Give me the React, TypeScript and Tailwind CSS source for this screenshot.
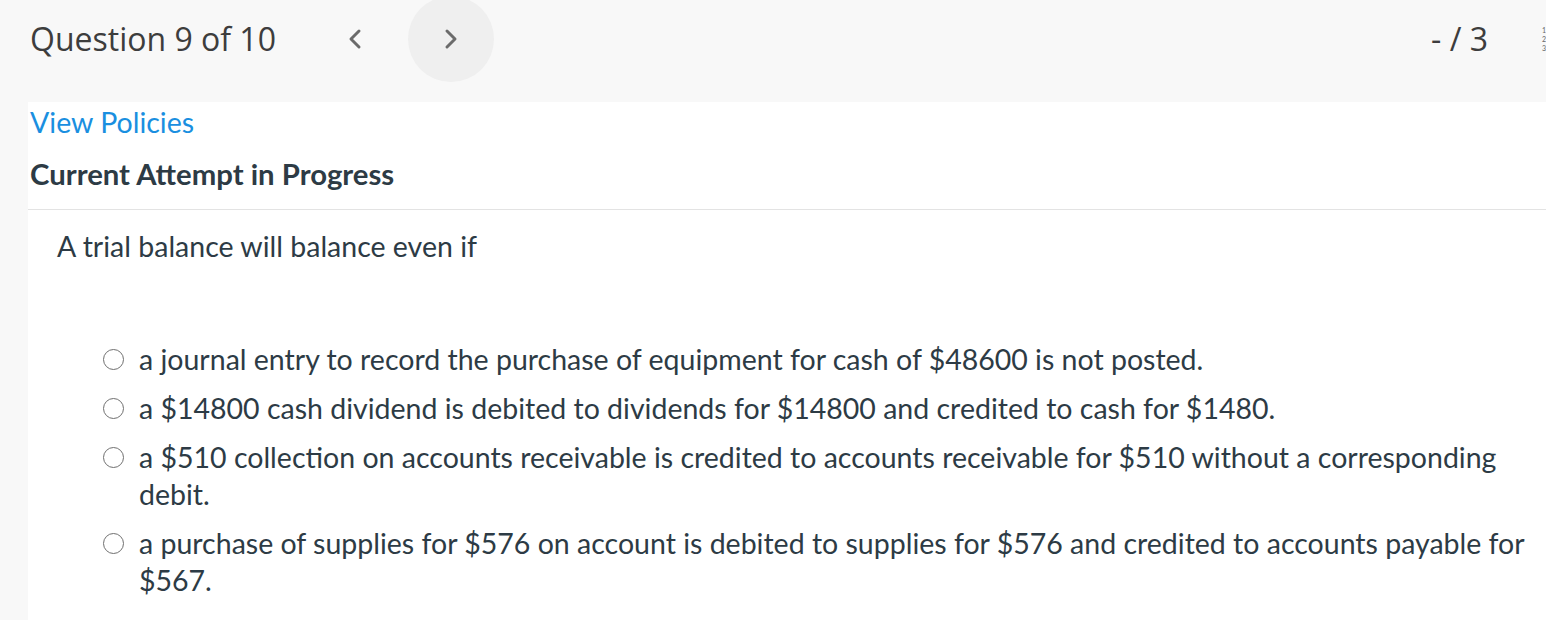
const options = [
  'a journal entry to record the purchase of equipment for cash of $48600 is not posted.',
  'a $14800 cash dividend is debited to dividends for $14800 and credited to cash for $1480.',
  'a $510 collection on accounts receivable is credited to accounts receivable for $510 without a corresponding debit.',
  'a purchase of supplies for $576 on account is debited to supplies for $576 and credited to accounts payable for $567.',
]

function Chevron({ dir }: { dir: 'left' | 'right' }) {
  return (
    <svg width="14" height="22" viewBox="0 0 14 22" fill="none">
      <polyline
        points={dir === 'left' ? '11,3 3,11 11,19' : '3,3 11,11 3,19'}
        stroke="#6b6b6b"
        strokeWidth="3"
        strokeLinecap="round"
        strokeLinejoin="round"
      />
    </svg>
  )
}

export default function App() {
  return (
    <main className="min-h-screen bg-[#f8f8f8] font-['Lato','Liberation_Sans',sans-serif]">
      <header className="flex h-[78px] items-center pl-[30px] pr-[58px] font-['Open_Sans','Liberation_Sans',sans-serif] text-[#3d3d3d]">
        <h1 className="text-[32px] leading-none">Question 9 of 10</h1>
        <div className="ml-[72px] flex items-center">
          <button className="flex h-[30px] w-[14px] items-center justify-center">
            <Chevron dir="left" />
          </button>
          <button className="ml-[46px] flex h-[86px] w-[86px] items-center justify-center rounded-full bg-[#efefef]">
            <Chevron dir="right" />
          </button>
        </div>
        <div className="ml-auto text-[32px] leading-none">- / 3</div>
      </header>
      <div className="relative h-[24px]">
        <div className="absolute right-0 top-[-52px] flex flex-col text-[7px] leading-[9px] text-[#666]">
          <span>1</span>
          <span>2</span>
          <span>3</span>
        </div>
      </div>
      <div className="flex">
        <div className="w-[28px] shrink-0" />
        <section className="min-h-[518px] flex-1 bg-white pb-6 text-[#2d3b45]">
          <a className="block pl-[2px] text-[28.5px] leading-[40px] text-[#1a8fe0]">View Policies</a>
          <h2 className="mt-[16px] pl-[2px] text-[29.3px] font-bold leading-[32px]">Current Attempt in Progress</h2>
          <div className="mt-[19px] h-px bg-[#e3e3e3]" />
          <p className="mt-[18px] pl-[29px] text-[28.5px] leading-[36px]">A trial balance will balance even if</p>
          <ul className="mt-[77px] flex flex-col gap-[12px] pl-[75px] pr-[14px]">
            {options.map((text, i) => (
              <li key={i} className="flex items-start">
                <span className="mt-[8px] h-[21px] w-[21px] shrink-0 rounded-full border-[1.5px] border-[#6f6f6f]" />
                <span className="ml-[15px] text-[28.5px] leading-[37px]">{text}</span>
              </li>
            ))}
          </ul>
        </section>
      </div>
    </main>
  )
}
